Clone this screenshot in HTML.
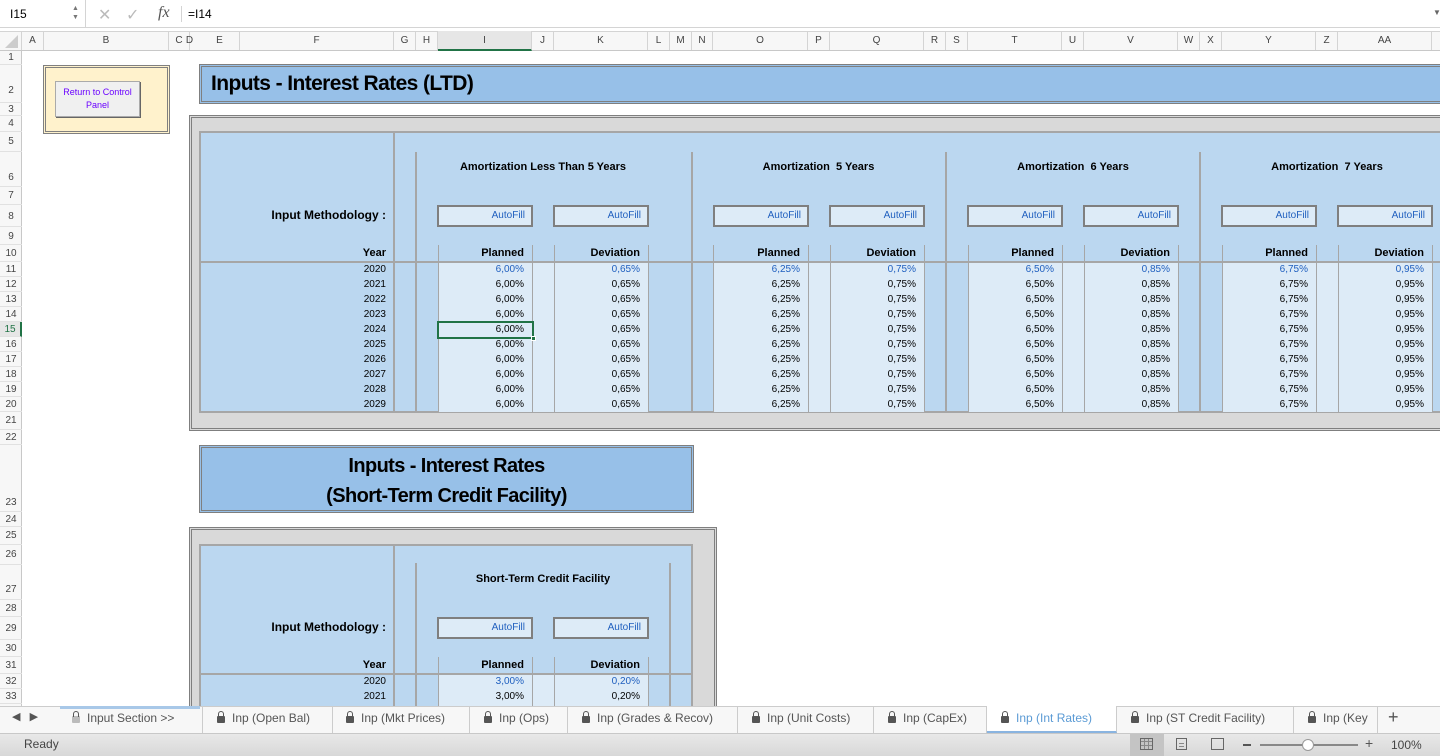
<!DOCTYPE html>
<html><head><meta charset="utf-8">
<style>
*{margin:0;padding:0;box-sizing:border-box}
body{width:1440px;height:756px;overflow:hidden;background:#fff;font-family:"Liberation Sans",sans-serif;position:relative;color:#000}
.a{position:absolute}
.ch{position:absolute;top:31px;height:19px;border-right:1px solid #d4d4d4;font-size:10px;color:#444;text-align:center;line-height:19px}
.rn{position:absolute;left:0;width:22px;font-size:10px;color:#444;text-align:center;border-bottom:1px solid #e1e1e1}
.col{position:absolute;font-size:10px;line-height:15px;text-align:right;top:262px}
.blue{color:#1f5fbf}
.hd{position:absolute;font-size:11px;font-weight:bold;text-align:right}
.af{position:absolute;height:22px;border:2px solid #7f7f7f;background:#ddebf7;color:#1f5fbf;font-size:10px;text-align:right;padding-right:6px;line-height:18px}
.vl{position:absolute;width:2px;background:#a6a6a6}
.tl{position:absolute;width:1px;background:#a6a6a6}
.lt{position:absolute;background:#ddebf7}
.tab{position:absolute;top:706px;height:27px;font-size:12px;color:#555;line-height:24px;border-right:1px solid #ccc}
.lock{display:inline-block;width:8px;height:7px;background:#555;border-radius:1px;position:relative;margin-right:7px;vertical-align:-1px}
.lock:before{content:"";position:absolute;left:1px;top:-5px;width:4px;height:5px;border:1px solid #555;border-bottom:none;border-radius:3px 3px 0 0}
</style></head><body>

<!-- formula bar -->
<div class="a" style="left:0;top:0;width:1440px;height:28px;background:#fff;border-bottom:1px solid #d4d4d4"></div>
<div class="a" style="left:0;top:0;width:86px;height:28px;border-right:1px solid #d4d4d4;font-size:12px;line-height:28px;padding-left:10px">I15</div>
<div class="a" style="left:72px;top:4px;font-size:7px;color:#777;line-height:9px">▲<br>▼</div>
<div class="a" style="left:98px;top:5px;font-size:16px;color:#bbb">✕</div>
<div class="a" style="left:126px;top:5px;font-size:16px;color:#bbb">✓</div>
<div class="a" style="left:158px;top:4px;font-size:16px;font-style:italic;font-family:'Liberation Serif',serif;color:#555">fx</div>
<div class="a" style="left:181px;top:6px;height:16px;border-left:1px solid #d4d4d4"></div>
<div class="a" style="left:188px;top:0;font-size:12px;line-height:28px">=I14</div>
<div class="a" style="left:1433px;top:8px;font-size:8px;color:#666">▼</div>

<!-- column header -->
<div class="a" style="left:0;top:31px;width:1440px;height:20px;background:#f7f7f7;border-top:1px solid #d4d4d4;border-bottom:1px solid #c8c8c8"></div>
<div class="a" style="left:5px;top:35px;width:0;height:0;border-left:13px solid transparent;border-bottom:13px solid #ccc"></div>
<div class="ch" style="left:0;width:22px"></div>
<div class="ch" style="left:22px;width:22px">A</div>
<div class="ch" style="left:44px;width:125px">B</div>
<div class="ch" style="left:169px;width:21px">C</div>
<div class="ch" style="left:179px;width:21px;border:none">D</div>
<div class="ch" style="left:200px;width:40px">E</div>
<div class="ch" style="left:240px;width:154px">F</div>
<div class="ch" style="left:394px;width:22px">G</div>
<div class="ch" style="left:416px;width:22px">H</div>
<div class="ch" style="left:438px;width:94px;background:#e6e6e6;border-bottom:2px solid #217346;height:20px">I</div>
<div class="ch" style="left:532px;width:22px">J</div>
<div class="ch" style="left:554px;width:94px">K</div>
<div class="ch" style="left:648px;width:22px">L</div>
<div class="ch" style="left:670px;width:22px">M</div>
<div class="ch" style="left:692px;width:21px">N</div>
<div class="ch" style="left:713px;width:95px">O</div>
<div class="ch" style="left:808px;width:22px">P</div>
<div class="ch" style="left:830px;width:94px">Q</div>
<div class="ch" style="left:924px;width:22px">R</div>
<div class="ch" style="left:946px;width:22px">S</div>
<div class="ch" style="left:968px;width:94px">T</div>
<div class="ch" style="left:1062px;width:22px">U</div>
<div class="ch" style="left:1084px;width:94px">V</div>
<div class="ch" style="left:1178px;width:22px">W</div>
<div class="ch" style="left:1200px;width:22px">X</div>
<div class="ch" style="left:1222px;width:94px">Y</div>
<div class="ch" style="left:1316px;width:22px">Z</div>
<div class="ch" style="left:1338px;width:94px">AA</div>

<!-- row header -->
<div class="a" style="left:0;top:51px;width:22px;height:655px;background:#f7f7f7;border-right:1px solid #c8c8c8"></div>
<div class="rn" style="top:51px;height:14px;line-height:14px">1</div>
<div class="rn" style="top:65px;height:38px;line-height:52px">2</div>
<div class="rn" style="top:103px;height:13px;line-height:13px">3</div>
<div class="rn" style="top:116px;height:16px;line-height:16px">4</div>
<div class="rn" style="top:132px;height:20px;line-height:20px">5</div>
<div class="rn" style="top:152px;height:35px;line-height:52px">6</div>
<div class="rn" style="top:187px;height:18px;line-height:18px">7</div>
<div class="rn" style="top:205px;height:22px;line-height:24px">8</div>
<div class="rn" style="top:227px;height:18px;line-height:20px">9</div>
<div class="rn" style="top:245px;height:17px;line-height:17px">10</div>
<div class="rn" style="top:262px;height:15px;line-height:15px">11</div>
<div class="rn" style="top:277px;height:15px;line-height:15px">12</div>
<div class="rn" style="top:292px;height:15px;line-height:15px">13</div>
<div class="rn" style="top:307px;height:15px;line-height:15px">14</div>
<div class="rn" style="top:322px;height:15px;line-height:15px;color:#217346;background:#e6e6e6;border-right:2px solid #217346">15</div>
<div class="rn" style="top:337px;height:15px;line-height:15px">16</div>
<div class="rn" style="top:352px;height:15px;line-height:15px">17</div>
<div class="rn" style="top:367px;height:15px;line-height:15px">18</div>
<div class="rn" style="top:382px;height:15px;line-height:15px">19</div>
<div class="rn" style="top:397px;height:15px;line-height:15px">20</div>
<div class="rn" style="top:412px;height:18px;line-height:18px">21</div>
<div class="rn" style="top:430px;height:15px;line-height:15px">22</div>
<div class="rn" style="top:445px;height:67px;line-height:116px">23</div>
<div class="rn" style="top:512px;height:15px;line-height:15px">24</div>
<div class="rn" style="top:527px;height:18px;line-height:18px">25</div>
<div class="rn" style="top:545px;height:20px;line-height:20px">26</div>
<div class="rn" style="top:565px;height:35px;line-height:50px">27</div>
<div class="rn" style="top:600px;height:17px;line-height:17px">28</div>
<div class="rn" style="top:617px;height:23px;line-height:23px">29</div>
<div class="rn" style="top:640px;height:17px;line-height:17px">30</div>
<div class="rn" style="top:657px;height:17px;line-height:17px">31</div>
<div class="rn" style="top:674px;height:15px;line-height:15px">32</div>
<div class="rn" style="top:689px;height:15px;line-height:15px">33</div>

<!-- return button -->
<div class="a" style="left:43px;top:65px;width:127px;height:69px;background:#fff2cc;border:3px double #808080"></div>
<div class="a" style="left:55px;top:81px;width:85px;height:36px;background:#f0f0f0;border:1px solid #aaa;box-shadow:1px 1px 0 #666;color:#6a00ff;font-size:9px;text-align:center;line-height:13px;padding-top:4px">Return to Control<br>Panel</div>

<!-- title 1 -->
<div class="a" style="left:199px;top:64px;width:1245px;height:40px;background:#97c0e8;border:3px double #7f7f7f;font-size:21px;font-weight:bold;line-height:34px;padding-left:9px;letter-spacing:-0.6px">Inputs - Interest Rates (LTD)</div>

<!-- section 1 -->
<div class="a" style="left:189px;top:115px;width:1255px;height:316px;background:#d9d9d9;border:3px double #7f7f7f"></div>
<div class="a" style="left:199px;top:131px;width:1245px;height:282px;background:#bbd7f0;border:2px solid #a6a6a6"></div>
<div class="lt" style="left:438px;top:263px;width:210px;height:149px"></div>
<div class="lt" style="left:713px;top:263px;width:211px;height:149px"></div>
<div class="lt" style="left:968px;top:263px;width:210px;height:149px"></div>
<div class="lt" style="left:1222px;top:263px;width:210px;height:149px"></div>
<div class="vl" style="left:393px;top:132px;height:280px"></div>
<div class="a" style="left:200px;top:261px;width:1240px;height:2px;background:#a6a6a6"></div>
<div class="vl" style="left:415px;top:152px;height:260px"></div>
<div class="vl" style="left:691px;top:152px;height:260px"></div>
<div class="vl" style="left:945px;top:152px;height:260px"></div>
<div class="vl" style="left:1199px;top:152px;height:260px"></div>
<div class="tl" style="left:438px;top:245px;height:167px"></div>
<div class="tl" style="left:532px;top:245px;height:167px"></div>
<div class="tl" style="left:554px;top:245px;height:167px"></div>
<div class="tl" style="left:648px;top:245px;height:167px"></div>
<div class="tl" style="left:713px;top:245px;height:167px"></div>
<div class="tl" style="left:808px;top:245px;height:167px"></div>
<div class="tl" style="left:830px;top:245px;height:167px"></div>
<div class="tl" style="left:924px;top:245px;height:167px"></div>
<div class="tl" style="left:968px;top:245px;height:167px"></div>
<div class="tl" style="left:1062px;top:245px;height:167px"></div>
<div class="tl" style="left:1084px;top:245px;height:167px"></div>
<div class="tl" style="left:1178px;top:245px;height:167px"></div>
<div class="tl" style="left:1222px;top:245px;height:167px"></div>
<div class="tl" style="left:1316px;top:245px;height:167px"></div>
<div class="tl" style="left:1338px;top:245px;height:167px"></div>
<div class="tl" style="left:1432px;top:245px;height:167px"></div>

<div class="hd" style="left:438px;top:161px;width:210px;text-align:center">Amortization Less Than 5 Years</div>
<div class="hd" style="left:713px;top:161px;width:211px;text-align:center">Amortization&nbsp; 5 Years</div>
<div class="hd" style="left:968px;top:161px;width:210px;text-align:center">Amortization&nbsp; 6 Years</div>
<div class="hd" style="left:1222px;top:161px;width:210px;text-align:center">Amortization&nbsp; 7 Years</div>
<div class="hd" style="left:200px;top:208px;width:186px;font-size:12px">Input Methodology :</div>
<div class="hd" style="left:200px;top:247px;width:186px">Year</div>

<div class="af" style="left:437px;top:205px;width:96px">AutoFill</div>
<div class="af" style="left:553px;top:205px;width:96px">AutoFill</div>
<div class="af" style="left:713px;top:205px;width:96px">AutoFill</div>
<div class="af" style="left:829px;top:205px;width:96px">AutoFill</div>
<div class="af" style="left:967px;top:205px;width:96px">AutoFill</div>
<div class="af" style="left:1083px;top:205px;width:96px">AutoFill</div>
<div class="af" style="left:1221px;top:205px;width:96px">AutoFill</div>
<div class="af" style="left:1337px;top:205px;width:96px">AutoFill</div>

<div class="hd" style="left:438px;top:247px;width:86px">Planned</div>
<div class="hd" style="left:554px;top:247px;width:86px">Deviation</div>
<div class="hd" style="left:713px;top:247px;width:87px">Planned</div>
<div class="hd" style="left:830px;top:247px;width:86px">Deviation</div>
<div class="hd" style="left:968px;top:247px;width:86px">Planned</div>
<div class="hd" style="left:1084px;top:247px;width:86px">Deviation</div>
<div class="hd" style="left:1222px;top:247px;width:86px">Planned</div>
<div class="hd" style="left:1338px;top:247px;width:86px">Deviation</div>

<div class="col" style="left:300px;width:86px">2020<br>2021<br>2022<br>2023<br>2024<br>2025<br>2026<br>2027<br>2028<br>2029</div>
<div class="col" style="left:438px;width:86px"><span class="blue">6,00%</span><br>6,00%<br>6,00%<br>6,00%<br>6,00%<br>6,00%<br>6,00%<br>6,00%<br>6,00%<br>6,00%</div>
<div class="col" style="left:554px;width:86px"><span class="blue">0,65%</span><br>0,65%<br>0,65%<br>0,65%<br>0,65%<br>0,65%<br>0,65%<br>0,65%<br>0,65%<br>0,65%</div>
<div class="col" style="left:713px;width:87px"><span class="blue">6,25%</span><br>6,25%<br>6,25%<br>6,25%<br>6,25%<br>6,25%<br>6,25%<br>6,25%<br>6,25%<br>6,25%</div>
<div class="col" style="left:830px;width:86px"><span class="blue">0,75%</span><br>0,75%<br>0,75%<br>0,75%<br>0,75%<br>0,75%<br>0,75%<br>0,75%<br>0,75%<br>0,75%</div>
<div class="col" style="left:968px;width:86px"><span class="blue">6,50%</span><br>6,50%<br>6,50%<br>6,50%<br>6,50%<br>6,50%<br>6,50%<br>6,50%<br>6,50%<br>6,50%</div>
<div class="col" style="left:1084px;width:86px"><span class="blue">0,85%</span><br>0,85%<br>0,85%<br>0,85%<br>0,85%<br>0,85%<br>0,85%<br>0,85%<br>0,85%<br>0,85%</div>
<div class="col" style="left:1222px;width:86px"><span class="blue">6,75%</span><br>6,75%<br>6,75%<br>6,75%<br>6,75%<br>6,75%<br>6,75%<br>6,75%<br>6,75%<br>6,75%</div>
<div class="col" style="left:1338px;width:86px"><span class="blue">0,95%</span><br>0,95%<br>0,95%<br>0,95%<br>0,95%<br>0,95%<br>0,95%<br>0,95%<br>0,95%<br>0,95%</div>

<!-- selected cell -->
<div class="a" style="left:437px;top:321px;width:97px;height:18px;border:2px solid #217346"></div>
<div class="a" style="left:531px;top:336px;width:5px;height:5px;background:#217346;border:1px solid #fff"></div>

<!-- title 2 -->
<div class="a" style="left:199px;top:445px;width:495px;height:68px;background:#97c0e8;border:3px double #7f7f7f;font-size:20px;font-weight:bold;line-height:30px;text-align:center;padding-top:3px;letter-spacing:-0.6px">Inputs - Interest Rates<br>(Short-Term Credit Facility)</div>

<!-- section 2 -->
<div class="a" style="left:189px;top:527px;width:528px;height:200px;background:#d9d9d9;border:3px double #7f7f7f"></div>
<div class="a" style="left:199px;top:544px;width:494px;height:180px;background:#bbd7f0;border:2px solid #a6a6a6"></div>
<div class="lt" style="left:438px;top:675px;width:210px;height:40px"></div>
<div class="vl" style="left:393px;top:545px;height:170px"></div>
<div class="a" style="left:200px;top:673px;width:492px;height:2px;background:#a6a6a6"></div>
<div class="vl" style="left:415px;top:563px;height:150px"></div>
<div class="vl" style="left:669px;top:563px;height:150px"></div>
<div class="tl" style="left:438px;top:657px;height:60px"></div>
<div class="tl" style="left:532px;top:657px;height:60px"></div>
<div class="tl" style="left:554px;top:657px;height:60px"></div>
<div class="tl" style="left:648px;top:657px;height:60px"></div>
<div class="hd" style="left:438px;top:573px;width:210px;text-align:center">Short-Term Credit Facility</div>
<div class="hd" style="left:200px;top:620px;width:186px;font-size:12px">Input Methodology :</div>
<div class="af" style="left:437px;top:617px;width:96px">AutoFill</div>
<div class="af" style="left:553px;top:617px;width:96px">AutoFill</div>
<div class="hd" style="left:200px;top:659px;width:186px">Year</div>
<div class="hd" style="left:438px;top:659px;width:86px">Planned</div>
<div class="hd" style="left:554px;top:659px;width:86px">Deviation</div>
<div class="col" style="left:300px;top:674px;width:86px">2020<br>2021</div>
<div class="col" style="left:438px;top:674px;width:86px"><span class="blue">3,00%</span><br>3,00%</div>
<div class="col" style="left:554px;top:674px;width:86px"><span class="blue">0,20%</span><br>0,20%</div>

<!-- tabs -->
<div class="a" style="left:0;top:706px;width:1440px;height:28px;background:#f7f7f7;border-top:1px solid #ccc;border-bottom:1px solid #c8c8c8"></div>
<div class="a" style="left:60px;top:706px;width:140px;height:3px;background:#a8c8e8"></div>
<div class="a" style="left:12px;top:710px;font-size:11px;color:#555">◀&nbsp;&nbsp;&nbsp;▶</div>
<div class="tab" style="left:60px;width:143px;padding-left:12px;color:#555"><span class="lock" style="background:#bbb"></span>Input Section &gt;&gt;</div>
<div class="tab" style="left:203px;width:130px;padding-left:14px"><span class="lock"></span>Inp (Open Bal)</div>
<div class="tab" style="left:333px;width:137px;padding-left:13px"><span class="lock"></span>Inp (Mkt Prices)</div>
<div class="tab" style="left:470px;width:98px;padding-left:14px"><span class="lock"></span>Inp (Ops)</div>
<div class="tab" style="left:568px;width:170px;padding-left:14px"><span class="lock"></span>Inp (Grades &amp; Recov)</div>
<div class="tab" style="left:738px;width:136px;padding-left:14px"><span class="lock"></span>Inp (Unit Costs)</div>
<div class="tab" style="left:874px;width:113px;padding-left:14px"><span class="lock"></span>Inp (CapEx)</div>
<div class="tab" style="left:987px;width:130px;padding-left:14px;background:#fff;color:#5b9bd5;border-bottom:2px solid #8ab4e0"><span class="lock"></span>Inp (Int Rates)</div>
<div class="tab" style="left:1117px;width:177px;padding-left:14px"><span class="lock"></span>Inp (ST Credit Facility)</div>
<div class="tab" style="left:1294px;width:84px;padding-left:14px;overflow:hidden"><span class="lock"></span>Inp (Key</div>
<div class="a" style="left:1388px;top:707px;font-size:18px;color:#555">+</div>

<!-- status bar -->
<div class="a" style="left:0;top:734px;width:1440px;height:22px;background:linear-gradient(#e8e8e8,#d8d8d8)"></div>
<div class="a" style="left:24px;top:737px;font-size:12px;color:#444">Ready</div>
<div class="a" style="left:1130px;top:734px;width:34px;height:22px;background:#c4c4c4"></div>
<div class="a" style="left:1140px;top:738px;width:13px;height:12px;border:1px solid #666;background:repeating-linear-gradient(90deg,transparent 0 3px,#888 3px 4px),repeating-linear-gradient(0deg,transparent 0 3px,#888 3px 4px)"></div>
<div class="a" style="left:1176px;top:738px;width:11px;height:12px;border:1px solid #666;background:repeating-linear-gradient(0deg,transparent 0 2px,#888 2px 3px);background-clip:content-box;padding:2px"></div>
<div class="a" style="left:1211px;top:738px;width:13px;height:12px;border:1px solid #666"></div>
<div class="a" style="left:1243px;top:744px;width:8px;height:2px;background:#555"></div>
<div class="a" style="left:1260px;top:744px;width:98px;height:2px;background:#888"></div>
<div class="a" style="left:1302px;top:739px;width:12px;height:12px;border-radius:50%;background:#fff;border:1px solid #999"></div>
<div class="a" style="left:1365px;top:735px;font-size:14px;color:#555">+</div>
<div class="a" style="left:1391px;top:738px;font-size:12px;color:#444">100%</div>

</body></html>
